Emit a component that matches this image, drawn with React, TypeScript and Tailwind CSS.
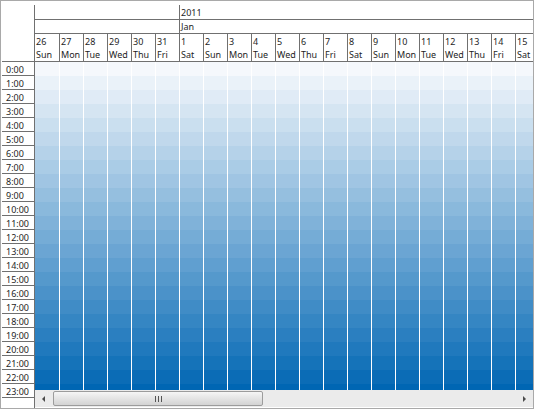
import React from "react";

const DAYS: { n: number; d: string }[] = [
  { n: 26, d: "Sun" },
  { n: 27, d: "Mon" },
  { n: 28, d: "Tue" },
  { n: 29, d: "Wed" },
  { n: 30, d: "Thu" },
  { n: 31, d: "Fri" },
  { n: 1, d: "Sat" },
  { n: 2, d: "Sun" },
  { n: 3, d: "Mon" },
  { n: 4, d: "Tue" },
  { n: 5, d: "Wed" },
  { n: 6, d: "Thu" },
  { n: 7, d: "Fri" },
  { n: 8, d: "Sat" },
  { n: 9, d: "Sun" },
  { n: 10, d: "Mon" },
  { n: 11, d: "Tue" },
  { n: 12, d: "Wed" },
  { n: 13, d: "Thu" },
  { n: 14, d: "Fri" },
  { n: 15, d: "Sat" },
];

const HOURS = Array.from({ length: 24 }, (_, i) => i);

// Hour bands fade from near-white at midnight to deep blue at 23:00.
const TOP = [245, 248, 252];
const BOTTOM = [0, 102, 179];
function bandColor(i: number) {
  const t = i / 23;
  const c = TOP.map((v, k) => Math.round(v + (BOTTOM[k] - v) * t));
  return `rgb(${c[0]}, ${c[1]}, ${c[2]})`;
}

export default function App() {
  return (
    <div className="h-[411px] w-[536px] bg-white font-['Noto_Sans','Liberation_Sans',sans-serif] text-[9px] text-[#1e1e1e]">
      <div className="flex h-[409px] w-[534px] overflow-hidden border border-[#a9a9a9] pt-[4px]">
        {/* Time ruler */}
        <div className="flex w-[34px] shrink-0 flex-col border-r border-[#707070]">
          <div className="h-[56px] shrink-0" />
          <div className="ml-[1px] border-t border-[#707070]">
            {HOURS.map((h) => (
              <div
                key={h}
                className="h-[14px] border-b border-[#707070] pl-[4px] pt-[1px] leading-[13px]"
              >
                {h}:00
              </div>
            ))}
          </div>
        </div>

        {/* Timeline */}
        <div className="flex min-w-0 flex-1 flex-col overflow-hidden">
          {/* Year */}
          <div className="flex h-[15px] shrink-0 border-b border-[#707070]">
            <div className="w-[144px] shrink-0" />
            <div className="flex-1 border-l border-[#707070] pl-[1px] pt-[2px] leading-[12px]">
              2011
            </div>
          </div>
          {/* Month */}
          <div className="flex h-[14px] shrink-0 border-b border-[#707070]">
            <div className="w-[144px] shrink-0" />
            <div className="flex-1 border-l border-[#707070] pl-[1px] pt-[1px] leading-[12px]">
              Jan
            </div>
          </div>
          {/* Days */}
          <div className="flex h-[28px] shrink-0 border-b border-[#707070]">
            {DAYS.map((day, i) => (
              <div
                key={i}
                className={
                  i === 0
                    ? "flex w-[24px] shrink-0 flex-col pl-[1px] pt-[1px] leading-[13px]"
                    : "flex w-[24px] shrink-0 flex-col border-l border-[#707070] pl-[1px] pt-[1px] leading-[13px]"
                }
              >
                <span>{day.n}</span>
                <span>{day.d}</span>
              </div>
            ))}
          </div>

          {/* Slots */}
          <div className="flex h-[328px] shrink-0 overflow-hidden">
            {DAYS.map((day, i) => (
              <div
                key={i}
                className={
                  i === 0
                    ? "flex w-[24px] shrink-0 flex-col"
                    : "flex w-[24px] shrink-0 flex-col border-l border-white"
                }
              >
                {HOURS.map((h) => (
                  <div
                    key={h}
                    className="h-[14px] shrink-0"
                    style={{ backgroundColor: bandColor(h) }}
                  />
                ))}
              </div>
            ))}
          </div>

          {/* Horizontal scrollbar */}
          <div className="flex h-[17px] shrink-0 items-center bg-[#ebebeb]">
            <div className="flex h-full w-[17px] shrink-0 items-center justify-center">
              <div className="h-0 w-0 border-y-[3px] border-r-[3px] border-y-transparent border-r-[#4a4a4a]" />
            </div>
            <div className="flex h-full flex-1 items-center pl-[1px]">
              <div className="flex h-[15px] w-[210px] items-center justify-center gap-[2px] rounded-[2px] border border-[#9c9c9c] bg-gradient-to-b from-[#f6f6f6] to-[#d3d3d3]">
                <span className="h-[6px] w-[1px] bg-[#555]" />
                <span className="h-[6px] w-[1px] bg-[#555]" />
                <span className="h-[6px] w-[1px] bg-[#555]" />
              </div>
            </div>
            <div className="flex h-full w-[17px] shrink-0 items-center justify-center">
              <div className="h-0 w-0 border-y-[3px] border-l-[3px] border-y-transparent border-l-[#4a4a4a]" />
            </div>
          </div>
        </div>
      </div>
    </div>
  );
}
